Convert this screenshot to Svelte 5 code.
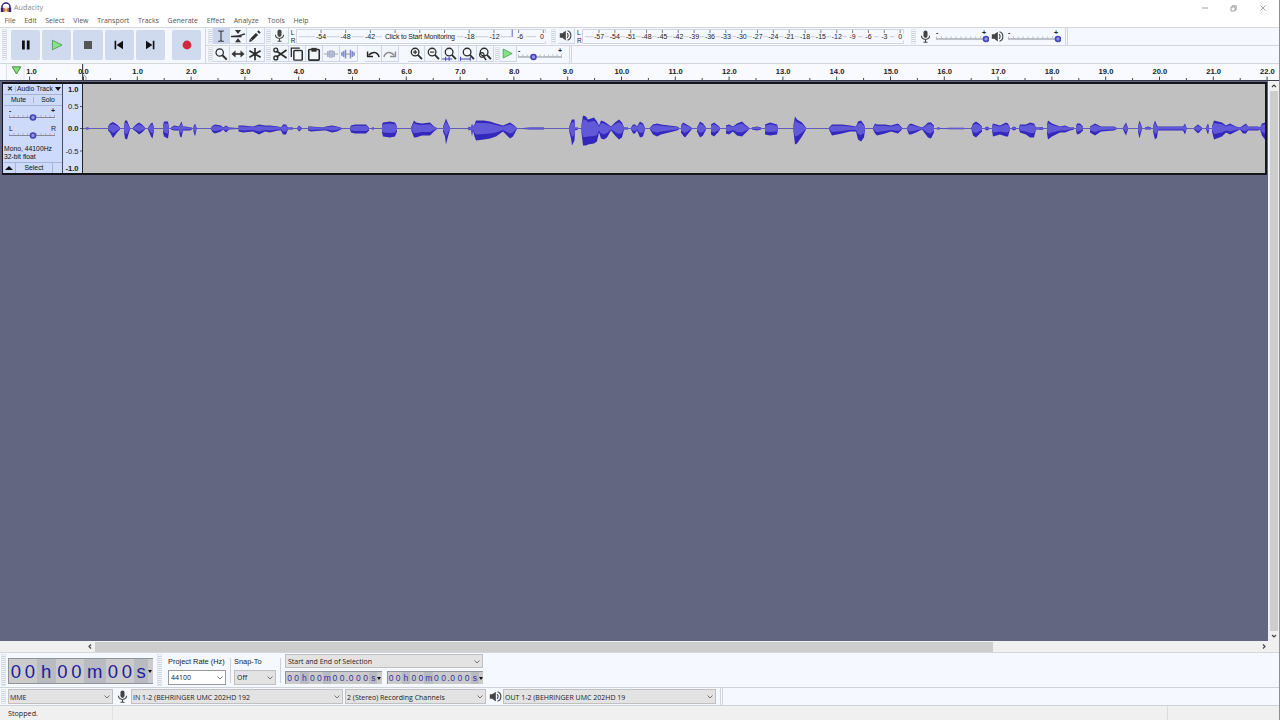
<script lang="ts">
  type Point = [number, number, number];

  const menus = ["File", "Edit", "Select", "View", "Transport", "Tracks", "Generate", "Effect", "Analyze", "Tools", "Help"];

  const ORIGIN = 83.5;
  const SECOND = 53.8;
  const MID = 44.5;

  const seconds = Array.from({ length: 23 }, (_, i) => i);
  const halfTicks = Array.from({ length: 46 }, (_, i) => i - 1);

  const recTicks = Array.from({ length: 10 }, (_, i) => i);
  const recLabels = [
    { x: 25, t: "-54" }, { x: 49.5, t: "-48" }, { x: 74, t: "-42" },
    { x: 173.5, t: "-18" }, { x: 198.5, t: "-12" }, { x: 224, t: "-6" }, { x: 246, t: "0" },
  ];
  const playLabels = Array.from({ length: 20 }, (_, i) => ({ x: 17 + i * 15.85, t: i === 19 ? "0" : String(i * 3 - 57) }));

  // [x, peak above the zero line, peak below it]
  const clips: Point[][] = [
    [[86, 1, 1], [88, 1, 1], [90, 0.3, 0.3]],
    [[108, 2, 2], [110, 5, 4], [113, 6.5, 9.5], [117, 4, 4], [120, 1, 1]],
    [[124, 2, 3], [125, 8, 10], [127, 8, 11], [129, 3, 4], [130, 1, 1]],
    [[133, 1, 1], [136, 4, 3], [139, 6, 6], [142, 4, 4], [145, 1, 1]],
    [[148, 1, 1], [151, 5, 8], [152.5, 6, 10], [154, 1, 2]],
    [[163, 3, 4], [164, 7, 8], [168, 7, 10], [169, 1, 3]],
    [[171, 1, 1], [174, 3, 2], [179, 2, 2], [180, 4, 8], [181.5, 7, 9], [183, 2, 2], [186, 2, 2], [190, 1, 2], [192, 1, 1]],
    [[193.5, 2, 3], [195, 5, 8], [196.5, 1, 1]],
    [[211, 1, 1], [213, 3, 4], [215, 4, 5], [221, 3, 3], [223, 1, 1], [226, 3, 4], [229, 1, 1], [238, 0.5, 0.5]],
    [[238.5, 3, 3], [243, 3, 4], [253, 2, 3], [259, 4, 6], [265, 3, 3], [270, 3, 4], [278, 2, 2], [281, 1, 2], [283, 4, 6], [286, 4, 6], [288, 1, 1], [293, 1, 1]],
    [[297.5, 1, 1], [299, 3, 3], [301.5, 1, 1]],
    [[308, 2, 2], [311, 2, 3], [323, 1, 2], [326, 2, 2], [332, 3, 4], [337, 2, 3], [342, 0.5, 0.5]],
    [[350, 1, 1], [351, 3, 4], [355, 4, 5], [366, 4, 5], [369, 1, 2]],
    [[372, 1, 1], [374, 1, 1]],
    [[382, 4, 4], [383, 6, 8], [390, 7, 9], [395, 6, 8], [397, 2, 3]],
    [[411, 1, 1], [414, 8, 9], [416, 6, 9], [422, 5, 7], [430, 6, 7], [434, 2, 3], [437, 0.5, 0.5]],
    [[443, 2, 3], [445, 7, 8], [446, 10, 16], [448, 5, 8], [450, 1, 1]],
    [[468.5, 2, 2], [471, 1, 1], [472, 5, 8], [473, 2, 2], [474.5, 4, 8], [476, 8, 12], [484, 8, 11], [490, 7, 10], [496, 5, 8], [503, 3, 3], [510, 6, 10], [513, 4, 8], [517, 0.5, 0.5]],
    [[523, 0.5, 0.5], [530, 1, 1], [544, 1, 1]],
    [[569, 1, 2], [571, 7, 10], [572, 9, 17], [574.5, 9, 12], [575, 1, 2], [578, 1, 1]],
    [[581.5, 4, 4], [583, 13, 17], [586, 12, 17], [588, 9, 16], [594, 11, 15], [597, 7, 13], [599, 3, 4], [601, 8, 10], [604, 7, 11], [607, 5, 9], [611, 2, 2], [615, 6, 7], [619, 9, 11], [622, 6, 9], [624, 1, 1], [628, 1, 1]],
    [[631, 1, 1], [633, 4, 5], [635, 4, 5], [637, 2, 2], [640, 7, 9], [643, 5, 8], [645, 1, 1]],
    [[650, 1, 1], [653, 4, 6], [657, 5, 8], [661, 4, 6], [669, 3, 4], [677, 2, 2], [679, 1, 1]],
    [[681, 3, 4], [683, 6, 7], [685, 5, 9], [690, 2, 3], [692, 0.5, 0.5]],
    [[697, 1, 3], [700, 7, 9], [703, 5, 7], [706, 1, 1]],
    [[711, 4, 6], [714, 6, 8], [718, 3, 4], [720, 1, 1]],
    [[726, 3, 5], [729, 4, 6], [733, 2, 3], [737, 5, 7], [742, 7, 8], [745, 4, 5], [749, 1, 1]],
    [[752, 1, 1], [757, 2, 2], [761, 1, 1]],
    [[765, 4, 6], [770, 6, 7], [777, 4, 6], [778, 1, 1]],
    [[793.5, 4, 3], [795, 12, 16], [797, 9, 15], [802, 6, 8], [806, 1, 1]],
    [[829, 1, 1], [832, 4, 7], [842, 4, 5], [850, 3, 3], [856, 2, 3], [858, 7, 11], [861, 8, 13], [864, 4, 9], [865, 1, 1]],
    [[873, 1, 1], [875, 5, 5], [877, 4, 7], [885, 4, 5], [891, 3, 3], [898, 5, 5], [902, 1, 1]],
    [[907, 1, 1], [909, 4, 6], [911, 5, 6], [916, 3, 4], [922, 1, 1], [925, 3, 5], [928, 6, 9], [931, 6, 10], [934, 3, 4]],
    [[937, 1, 1], [939, 1, 1], [941, 0.3, 0.3], [950, 0.8, 0.8], [964, 0.8, 0.8]],
    [[971.5, 1, 1], [973, 5, 7], [976, 7, 9], [979, 5, 6], [982, 2, 3]],
    [[985, 1, 1], [987, 2, 2], [989, 1, 1]],
    [[992, 2, 2], [993, 5, 8], [1000, 3, 6], [1006, 6, 8], [1008, 5, 8], [1010, 1, 1]],
    [[1012, 1, 1], [1014, 2, 2], [1016, 1, 1]],
    [[1019, 1, 1], [1020, 4, 4], [1026, 4, 6], [1030, 6, 9], [1034, 5, 9], [1036, 1, 1], [1043, 1.2, 1.2]],
    [[1047, 4, 5], [1048, 8, 11], [1052, 5, 8], [1060, 2, 4], [1065, 3, 4], [1070, 1, 2], [1074, 1, 1]],
    [[1076, 2, 2], [1077, 5, 6], [1080, 5, 5], [1083, 2, 2]],
    [[1090, 2, 4], [1095, 5, 7], [1101, 2, 3], [1114, 2, 2], [1117, 0.5, 0.5]],
    [[1123, 1, 1], [1126, 6, 7], [1128, 1, 1]],
    [[1138, 2, 3], [1139.5, 8, 10], [1141, 4, 4], [1142, 1, 1]],
    [[1145, 1, 1], [1148, 2, 1], [1151, 1, 1]],
    [[1153, 2, 3], [1155, 8, 11], [1157, 3, 9], [1158, 2, 2], [1183, 2, 2], [1185, 5, 6], [1186.5, 1, 1]],
    [[1194, 1, 1], [1198, 4, 5], [1202, 1, 1]],
    [[1206, 1, 1], [1208, 5, 6], [1209, 2, 2]],
    [[1212, 2, 3], [1214, 8, 11], [1222, 6, 8], [1226, 3, 4], [1230, 5, 6], [1236, 2, 3], [1240, 1, 1], [1243, 3, 5], [1246, 5, 5], [1248, 2, 2], [1258, 2, 2], [1260, 1, 1], [1262, 5, 7], [1265, 6, 11]],
  ];

  function shape(points: Point[], up: number, down: number) {
    const top = points.map(([x, a]) => `${x - 83},${MID - a * up}`);
    const bottom = [...points].reverse().map(([x, , b]) => `${x - 83},${MID + b * down}`);
    return [...top, ...bottom].join(" ");
  }

  const editIcons = ["cut", "copy", "paste", "trim", "silence"];
  const zoomIcons = ["zoomin", "zoomout", "zoomsel", "zoomfit", "zoomtoggle"];
  const smallTime = "00h00m00.000s".split("");
  const bigTime = [
    { t: "00", w: 28 }, { t: "h", w: 18.5 }, { t: "00", w: 28 }, { t: "m", w: 22.5 }, { t: "00", w: 28 }, { t: "s", w: 14 },
  ];
</script>

{#snippet icon(name: string, size = 16)}
  <svg class="icon" width={size} height={size} viewBox="0 0 16 16" fill="none" stroke="#2c2c2c" stroke-width="1.6">
    {#if name === "pause"}
      <path d="M4 3.5h2.8v9H4zM8.8 3.5h2.8v9H8.8z" fill="#111" stroke="none" />
    {:else if name === "play"}
      <path d="M3.4 3.2 13 8l-9.6 4.8z" fill="#84e386" stroke="#4f9d55" stroke-width="0.9" />
    {:else if name === "stop"}
      <path d="M4 4h8v8H4z" fill="#555" stroke="none" />
    {:else if name === "start"}
      <path d="M3.6 3.8h1.6v8.4H3.6zM12 3.8v8.4L5.6 8z" fill="#111" stroke="none" />
    {:else if name === "end"}
      <path d="M10.8 3.8h1.6v8.4h-1.6zM4 3.8v8.4L10.4 8z" fill="#111" stroke="none" />
    {:else if name === "record"}
      <circle cx="8" cy="8" r="4.4" fill="#d2293d" stroke="none" />
    {:else if name === "ibeam"}
      <path d="M4.8 2.2H7l1 .8 1-.8h2.2M8 3v10.4M4.8 14H7l1-.8 1 .8h2.2" stroke-width="1.2" />
    {:else if name === "envelope"}
      <path d="M0 8.6c5 .2 9 0 16-3M0 8.6h12" stroke-width="1.8" />
      <path d="M4.5 1.2h7L8 5.6zM4.5 15h7L8 10.6z" fill="#333" stroke="none" />
    {:else if name === "pencil"}
      <path d="m4 12 6.3-6.3M11.7 4.3l1.6-1.6" stroke-width="3.4" />
      <path d="m1.2 14.9 1.1-4 2.9 2.9z" fill="#333" stroke="none" />
    {:else if name === "magnifier"}
      <circle cx="6.5" cy="6.3" r="4.2" stroke-width="1.4" />
      <path d="m9.6 9.4 5 5" stroke-width="2.2" />
    {:else if name === "shift"}
      <path d="M3 8h10" stroke-width="1.8" />
      <path d="M.5 8l4.7-4v8zM15.5 8l-4.7-4v8z" fill="#333" stroke="none" />
    {:else if name === "star"}
      <path d="M8 1v14M1.6 4.3l12.8 7.4M14.4 4.3 1.6 11.7" stroke-width="1.9" />
    {:else if name === "mic"}
      <rect x="5.5" y=".5" width="5" height="9.2" rx="2.5" fill="#444" stroke="none" />
      <path d="M3 7.2c0 2.6 2 4.4 5 4.4s5-1.8 5-4.4M8 11.4v3.4M5.5 15h5" stroke="#444" stroke-width="1.3" />
    {:else if name === "speaker"}
      <path d="M1 5.3h3L8.4 2v12L4 10.7H1z" fill="#444" stroke="none" />
      <path d="M10 5.2c1.6 1.2 1.6 4.4 0 5.6M10.5 2.2c5.4 1.6 5.4 10 0 11.6" stroke="#444" stroke-width="1.4" />
    {:else if name === "cut"}
      <path d="M4 4.6 15.5 12.5M4 11.4l11.5-8" stroke-width="2" />
      <circle cx="3.2" cy="3.5" r="2.2" />
      <circle cx="3.2" cy="12.5" r="2.2" />
    {:else if name === "copy"}
      <path d="M1.5 11.5V1.2h9.7" stroke-width="1.5" />
      <rect x="4.4" y="4" width="9.6" height="11" rx="1" fill="#f3f7fd" stroke-width="1.7" />
    {:else if name === "paste"}
      <rect x="2" y="2.8" width="12" height="12.2" rx="1" stroke-width="1.8" />
      <path d="M5 1h6v4.4H5z" fill="#333" stroke="none" />
    {:else if name === "trim"}
      <path d="M0 8h3.5M12.5 8H16" stroke="#999" stroke-width="1" />
      <path d="M4.5 4.5v7M6.8 3.8v8.4M9.2 3.8v8.4M11.5 4.5v7" stroke="#969cba" stroke-width="1.6" />
    {:else if name === "silence"}
      <path d="M1 6v4M3 4.5v7M5.2 3v10M10.8 3v10M13 4.5v7M15 6v4" stroke="#858dcc" stroke-width="1.8" />
      <path d="M5 8h6" stroke="#888" stroke-width="1" />
    {:else if name === "undo" || name === "redo"}
      <g transform={name === "redo" ? "matrix(-1 0 0 1 16 0)" : ""} stroke={name === "redo" ? "#8c8c90" : "#222"}>
        <path d="M3 9.5C7 5 13 5 15 11.5" stroke-width="1.7" />
        <path d="M1.8 5v5.9H8" stroke-width="1.6" />
      </g>
    {:else}
      <circle cx="7" cy="5.8" r="4.4" stroke-width="1.5" />
      <path d="m10.2 9 4.6 4.8" stroke-width="2.1" />
      {#if name === "zoomin"}
        <path d="M4.6 5.8h4.8M7 3.4v4.8" stroke-width="1.3" />
      {:else if name === "zoomout"}
        <path d="M4.6 5.8h4.8" stroke-width="1.3" />
      {:else if name === "zoomsel"}
        <path d="M-1 13.6h11.5M3 11.2v4.6M7 11.2v4.6" stroke="#4244b4" stroke-width="1.2" />
      {:else if name === "zoomfit"}
        <path d="M-1 13.6h11.5M-.6 11.2v4.6M10.6 11.2v4.6" stroke="#4244b4" stroke-width="1.2" />
      {:else}
        <circle cx="4.4" cy="9" r="2.6" stroke-width="1.3" />
        <path d="m6.5 11 2.8 4" stroke-width="1.8" />
      {/if}
    {/if}
  </svg>
{/snippet}

{#snippet slider(width: number, pos: number, left = "-", right = "+")}
  <svg class="slider" {width} height="17" viewBox="0 0 {width} 17">
    <text x="1" y="6.5" class:sign={left === "-"}>{left}</text>
    <text x={width - 7} y="6.5" class:sign={left === "-"}>{right}</text>
    <path d="M1 11H{width - 3}" stroke="#858a95" stroke-width="1.2" />
    {#each Array.from({ length: 11 }, (_, i) => i) as i (i)}
      <path d="M{1.5 + (i * (width - 5)) / 10} 8.5v2" stroke="#a0a4ae" stroke-width="0.7" />
    {/each}
    <circle cx={pos} cy="11" r="2.5" fill="#9497e0" stroke="#4443bb" stroke-width="1.6" />
  </svg>
{/snippet}

{#snippet chevron()}
  <svg class="chev" width="6" height="4" viewBox="0 0 6 4" fill="none" stroke="#555" stroke-width="0.8"><path d="m.5.5 2.5 2.5L5.5.5" /></svg>
{/snippet}

{#snippet timeBox()}
  <div class="timebox">
    {#each smallTime as ch, i (i)}
      <span class:unit={/[hms]/.test(ch)} class:dot={ch === "."}>{ch}</span>
    {/each}
    <i class="drop"></i>
  </div>
{/snippet}

<div class="app">
  <header class="title">
    <svg width="12" height="11" viewBox="0 0 12 11">
      <path d="M2 7V5a4 4 0 0 1 8 0v2" fill="none" stroke="#2b2778" stroke-width="1.5" />
      <path d="M3.8 7.5 5 5l1 2.5L7 5l1.2 2.5v2H3.8z" fill="#f2a53a" />
      <path d="M.8 5.8h2.8V10H.8zM8.4 5.8h2.8V10H8.4z" fill="#2b2778" />
      <path d="M3.5 6.5h1V10h-1zM7.5 6.5h1V10h-1z" fill="#d63b35" />
    </svg>
    <span>Audacity</span>
    <svg class="winctl" width="66" height="8" viewBox="0 0 66 8" fill="none" stroke="#8a8a8a" stroke-width="0.8">
      <path d="M1 4h6M30 3h4v4h-4zM31.2 3V1.8h4v4H34M59.5 1.5l5 5M64.5 1.5l-5 5" />
    </svg>
  </header>

  <nav class="menu">
    {#each menus as m (m)}<span>{m}</span>{/each}
  </nav>

  <section class="toolbars">
    <div class="transport">
      <i class="grip"></i>
      {#each ["pause", "play", "stop", "start", "end", "record"] as name (name)}
        <button class="big" class:rec={name === "record"} aria-label={name}>{@render icon(name)}</button>
      {/each}
    </div>
    <div class="rows">
      <div class="row">
        <i class="grip"></i>
        <button class="tool active" aria-label="selection">{@render icon("ibeam", 14)}</button>
        <button class="tool" aria-label="envelope">{@render icon("envelope", 14)}</button>
        <button class="tool" aria-label="draw">{@render icon("pencil", 14)}</button>
        <i class="grip two"></i>
        <button class="tool" aria-label="record meter">{@render icon("mic", 13)}</button>
        <div class="lr"><span>L</span><span>R</span></div>
        <svg class="meter" width="252" height="17" viewBox="0 0 252 17">
          <path class="box" d="M.5 1.5h249v14H.5z" />
          <path d="M3 8.7h243" stroke="#aeb2bd" stroke-width="0.6" />
          {#each recTicks as i (i)}<path d="M{25 + i * 24.7} 2v3" stroke="#666" stroke-width="0.8" />{/each}
          {#each recLabels as l (l.t)}
            <rect x={l.x - 6} y="5" width="12" height="8" fill="#f5f8fe" />
            <text x={l.x} y="11.3">{l.t}</text>
          {/each}
          <rect x="86" y="5" width="75" height="8" fill="#f5f8fe" />
          <text x="124" y="11.4" textLength="70">Click to Start Monitoring</text>
          <path d="M216.2 1.5v7" stroke="#605bc8" />
        </svg>
        <i class="grip three"></i>
        <button class="tool" aria-label="playback meter">{@render icon("speaker", 13)}</button>
        <div class="lr"><span>L</span><span>R</span></div>
        <svg class="meter" width="323" height="17" viewBox="0 0 323 17">
          <path class="box" d="M.5 1.5h321v14H.5z" />
          <path d="M3 8.7h314" stroke="#aeb2bd" stroke-width="0.6" />
          {#each playLabels as l (l.t)}
            <path d="M{l.x} 2v3" stroke="#666" stroke-width="0.8" />
            <rect x={l.x - 5.5} y="5.4" width="11" height="7" fill="#f5f8fe" />
            <text x={l.x} y="11.3">{l.t}</text>
          {/each}
        </svg>
        <i class="grip four"></i>
        <span class="plain">{@render icon("mic", 13)}</span>
        {@render slider(54, 51)}
        <span class="plain spk">{@render icon("speaker", 13)}</span>
        {@render slider(54, 51)}
        <i class="end"></i>
      </div>
      <div class="row second">
        <i class="grip"></i>
        {#each ["magnifier", "shift", "star"] as name (name)}
          <button class="tool" aria-label={name}>{@render icon(name, 14)}</button>
        {/each}
        <i class="grip two"></i>
        {#each editIcons as name (name)}
          <button class="tool" aria-label={name}>{@render icon(name, 14)}</button>
        {/each}
        <i class="gap"></i>
        <button class="tool" aria-label="undo">{@render icon("undo", 14)}</button>
        <button class="tool" aria-label="redo">{@render icon("redo", 14)}</button>
        <i class="gap wide"></i>
        {#each zoomIcons as name (name)}
          <button class="tool" aria-label={name}>{@render icon(name, 14)}</button>
        {/each}
        <i class="grip speed"></i>
        <button class="tool" aria-label="play at speed">{@render icon("play", 15)}</button>
        {@render slider(48, 16.5)}
        <i class="end"></i>
      </div>
    </div>
  </section>

  <svg class="ruler" width="1279" height="17" viewBox="0 0 1279 16">
    <path d="M6.5 0v16M24 0v16" stroke="#dde2ec" />
    <path d="M12.2 2.8h8.6l-4.3 7.2z" fill="#83e37a" stroke="#477a46" stroke-width="0.9" />
    <text x="31.5" y="10.3">1.0</text>
    {#each halfTicks as i (i)}
      <path d="M{ORIGIN + (i * SECOND) / 2} {i % 2 ? 14 : 12.5}V16" stroke="#333" stroke-width="0.9" />
    {/each}
    <path d="M29.6 12.5V16" stroke="#333" stroke-width="0.9" />
    {#each seconds as s (s)}
      <text x={ORIGIN + s * SECOND + (s ? 0.3 : 0)} y="10.3">{s}.0</text>
    {/each}
    <path d="M82.7 0v16" stroke="#222" />
    <path d="M84 10.5l2 3v3" stroke="#999" fill="none" />
  </svg>

  <main class="workspace">
    <div class="tracks">
      <div class="track">
        <div class="panel">
          <div class="head">
            <span class="close">✕</span>
            <span class="name">Audio Track</span>
            <i class="tri"></i>
          </div>
          <div class="pair"><span>Mute</span><span>Solo</span></div>
          {@render slider(50, 25)}
          {@render slider(50, 25, "L", "R")}
          <div class="info">Mono, 44100Hz<br />32-bit float</div>
          <div class="foot"><span class="up"></span><span class="sel">Select</span></div>
        </div>
        <svg class="scale" width="20" height="89" viewBox="0 0 19 89">
          <text x="15.5" y="7.5" class="b">1.0</text>
          <text x="15.5" y="24.8">0.5</text>
          <text x="15.5" y="47.2" class="b">0.0</text>
          <text x="15.5" y="69.6">-0.5</text>
          <text x="15.5" y="87" class="b">-1.0</text>
          <path d="M17 22.5h2M17 44.5h2M17 67h2" stroke="#333" stroke-width="0.8" />
        </svg>
        <svg class="wave" width="1182" height="89" viewBox="0 0 1182 89">
          <path d="M0 {MID}h1182" stroke="#4a43b4" stroke-width="0.8" />
          {#each clips as c, i (i)}
            <polygon points={shape(c, 1, 1)} fill="#3328bb" />
            <polygon points={shape(c, 0.7, 0.5)} fill="#6259d8" />
          {/each}
        </svg>
      </div>
    </div>
    <div class="vscroll">
      <svg width="10" height="10" viewBox="0 0 10 10"><path d="m3 6 2-2 2 2" /></svg>
      <i></i>
      <svg width="10" height="10" viewBox="0 0 10 10"><path d="m3 4 2 2 2-2" /></svg>
    </div>
  </main>

  <div class="hscroll">
    <svg width="10" height="11" viewBox="0 0 10 11"><path d="M6 3.5 4 5.5l2 2" /></svg>
    <div class="rail"><i></i></div>
    <svg width="10" height="11" viewBox="0 0 10 11"><path d="m4 3.5 2 2-2 2" /></svg>
  </div>

  <section class="selection">
    <i class="grip"></i>
    <div class="bigtime">
      {#each bigTime as c, i (i)}
        <span class:unit={c.t.length === 1} style="width: {c.w}px">{#each c.t.split("") as ch, j (j)}<b>{ch}</b>{/each}</span>
      {/each}
      <i class="drop"></i>
    </div>
    <i class="grip mid"></i>
    <div class="field rate"><label for="rate">Project Rate (Hz)</label><div id="rate" class="select white"><span>44100</span>{@render chevron()}</div></div>
    <i class="bar"></i>
    <div class="field snap"><label for="snap">Snap-To</label><div id="snap" class="select"><span>Off</span>{@render chevron()}</div></div>
    <i class="bar"></i>
    <div class="range">
      <div class="select"><span>Start and End of Selection</span>{@render chevron()}</div>
      <div class="boxes">{@render timeBox()}{@render timeBox()}</div>
    </div>
  </section>

  <section class="device">
    <i class="grip"></i>
    <div class="select host"><span>MME</span>{@render chevron()}</div>
    <span class="dev">{@render icon("mic", 13)}</span>
    <div class="select input"><span>IN 1-2 (BEHRINGER UMC 202HD 192</span>{@render chevron()}</div>
    <div class="select chans"><span>2 (Stereo) Recording Channels</span>{@render chevron()}</div>
    <span class="dev">{@render icon("speaker", 13)}</span>
    <div class="select output"><span>OUT 1-2 (BEHRINGER UMC 202HD 19</span>{@render chevron()}</div>
    <i class="end"></i>
  </section>

  <footer class="status"><span class="msg">Stopped.</span><span class="mid"></span><span></span></footer>
</div>

<style>
  :global(body) { overflow: hidden; }
  .app, .app :global(*) { box-sizing: border-box; }
  .app {
    width: 1280px;
    height: 720px;
    display: flex;
    flex-direction: column;
    border-right: 1px solid #8d8d94;
    background: #f5f8fe;
    color: #222;
    font: 7px/1 "Open Sans", "Noto Sans", sans-serif;
  }
  .icon, .slider, .meter, .chev { display: block; flex: none; }
  .icon { overflow: visible; }
  button { border: 0; padding: 0; display: grid; place-items: center; flex: none; }

  .title {
    height: 14px;
    flex: none;
    display: flex;
    align-items: center;
    padding-top: 1px;
    background: #fff;
    color: #8b8b8b;
    font-size: 7.3px;
  }
  .title span { margin-left: 2px; }
  .winctl { margin-left: auto; margin-right: 12px; }
  .menu {
    height: 13px;
    flex: none;
    display: flex;
    align-items: center;
    gap: 8.6px;
    padding: 1px 0 0 4.5px;
    background: #fff;
    color: #555;
    font-size: 7.02px;
  }

  .toolbars {
    height: 36px;
    flex: none;
    display: flex;
    border-top: 1px solid #d3d6dc;
  }
  .transport {
    width: 206px;
    display: flex;
    align-items: center;
    gap: 2px;
    padding: 0 0 2px 2px;
    border-right: 1px solid #d3d6dc;
  }
  .grip {
    flex: none;
    width: 5px;
    align-self: stretch;
    margin: 1px 0;
    border: 1px solid #e0e4ec;
    background: repeating-linear-gradient(#f5f8fe 0 1px, #ccd0d9 1px 2px);
  }
  .transport .grip { margin-right: 2px; }
  .big {
    width: 29.2px;
    height: 30px;
    border-radius: 2px;
    background: #cfdaef;
  }
  .big.rec { margin-left: 5px; }
  .rows { flex: 1; }
  .row {
    height: 17.5px;
    display: flex;
    align-items: center;
    padding-left: 2px;
    border-bottom: 1px solid #d3d6dc;
  }
  .row.second { border-bottom: 0; height: 17px; }
  .tool {
    width: 17.2px;
    height: 16px;
    background: #f1f5fc;
    border-right: 1px solid #cdd6e6;
    border-bottom: 1px solid #cdd6e6;
  }
  .tool.active { background: #cbd6ec; }
  .grip.two { margin-left: 1px; margin-right: 1px; }
  .grip.three { margin-left: 3px; margin-right: 2px; }
  .grip.four { margin-left: 6px; margin-right: 0; }
  .grip.speed { margin-left: 1px; margin-right: 0; }
  .gap { flex: none; width: 7px; }
  .gap.wide { width: 9px; }
  .end { flex: none; width: 3px; align-self: stretch; border: solid #d3d6dc; border-width: 0 1px; margin-left: 4px; }
  .lr {
    width: 7px;
    padding-left: 2px;
    display: flex;
    flex-direction: column;
    gap: 1px;
    font: 6.5px/7px "Liberation Sans", Arial, sans-serif;
  }
  .meter text, .slider text { font: 7px "Liberation Sans", Arial, sans-serif; fill: #222; }
  .slider .sign { font-weight: bold; }
  .meter text { text-anchor: middle; }
  .box { fill: #f5f8fe; stroke: #c9cdd6; stroke-width: 0.8; }
  .plain { width: 19px; display: grid; place-items: center; }
  .plain.spk { width: 18px; }

  .ruler { display: block; flex: none; background: #f8faff; border-top: 1px solid #d3d6dc; }
  .ruler text {
    font: bold 7.6px "Liberation Sans", Arial, sans-serif;
    text-anchor: middle;
    fill: #222;
  }

  .workspace { flex: 1; min-height: 0; display: flex; background: #636680; border-top: 1px solid #3c3d50; }
  .tracks { flex: 1; padding: 1px 0 0 2px; }
  .track {
    width: 1265px;
    height: 93px;
    display: flex;
    border: 1px solid #15151c;
    border-width: 2px 2px 2px 1px;
    background: #cddafa;
  }
  .panel {
    width: 60px;
    padding-left: 1px;
    border-right: 1px solid #444a63;
    display: flex;
    flex-direction: column;
    font: 6.8px/1 "Liberation Sans", Arial, sans-serif;
    color: #111;
  }
  .head { height: 11px; display: flex; align-items: center; border-bottom: 1px solid #a9b4d2; }
  .close { width: 11px; text-align: center; font-weight: bold; }
  .name { flex: 1; border-left: 1px solid #a9b4d2; padding-left: 1px; white-space: nowrap; }
  .tri { border: solid transparent; border-width: 4px 3.5px 0; border-top-color: #111; margin-right: 1px; }
  .pair { height: 11px; display: grid; grid-template-columns: 1fr 1fr; border-bottom: 1px solid #a9b4d2; align-items: center; text-align: center; }
  .pair span + span { border-left: 1px solid #a9b4d2; }
  .panel .slider { margin-left: 4px; height: 18px; }
  .info { padding-top: 3px; line-height: 7.5px; flex: 1; white-space: nowrap; }
  .foot { height: 11px; display: flex; align-items: center; border-top: 1px solid #a9b4d2; }
  .up { width: 8px; border: solid transparent; border-width: 0 4px 4px; border-bottom-color: #111; margin: 0 2px 0 1px; }
  .sel { width: 38px; height: 10px; line-height: 10px; text-align: center; border: solid #a9b4d2; border-width: 0 1px; }
  .scale { display: block; background: #d3dffc; border-right: 1px solid #222; }
  .scale text { font: 7.6px "Liberation Sans", Arial, sans-serif; text-anchor: end; fill: #222; }
  .scale .b { font-weight: bold; }
  .wave { display: block; background: #c0c0c0; }

  .vscroll { width: 11px; background: #f0f0f0; display: flex; flex-direction: column; align-items: center; }
  .vscroll i { flex: 1; width: 8px; background: #cdcdcd; }
  .vscroll path, .hscroll path { fill: none; stroke: #444; stroke-width: 1.2; }
  .hscroll { height: 12px; flex: none; display: flex; align-items: center; padding: 0 10px 0 85px; background: #f0f0f0; border-bottom: 1px solid #d3d6dc; }
  .rail { flex: 1; align-self: stretch; padding-top: 1px; }
  .rail i { display: block; width: 898px; height: 10px; background: #cdcdcd; }

  .selection { height: 35px; flex: none; display: flex; padding-left: 1px; border-bottom: 1px solid #cfd2d9; }
  .bigtime {
    width: 145px;
    height: 26px;
    margin: 5px 4px 0 2px;
    display: flex;
    border: 1px solid #8f939d;
    border-right: 0;
    background: #cbcbcb;
    color: #1d1d9c;
    font: 18.5px/25px "Liberation Sans", Arial, sans-serif;
  }
  .bigtime span { display: flex; justify-content: space-around; flex: none; }
  .bigtime b { font-weight: normal; }
  .unit { background: #b9bbc2; }
  .drop { align-self: center; border: solid transparent; border-width: 3px 2.5px 0; border-top-color: #111; }
  .grip.mid { margin-right: 6px; }
  .field { display: flex; flex-direction: column; gap: 4px; padding-top: 4.5px; font-size: 7.4px; }
  .field label { height: 8px; line-height: 8px; white-space: nowrap; font-family: "Liberation Sans", Arial, sans-serif; }
  .field .select { height: 15px; }
  .rate { width: 58px; }
  .snap { width: 42px; }
  .bar { flex: none; width: 1px; height: 25px; margin: 5px 3.5px 0; background: #cdd0d8; }
  .select {
    height: 14px;
    display: flex;
    align-items: center;
    justify-content: space-between;
    padding: 1px 2px 0;
    border: 1px solid #c0c0c0;
    background: #e3e3e3;
    color: #222;
    font-size: 7px;
    white-space: nowrap;
  }
  .select.white { background: #fff; border-color: #999; }
  .range { width: 198px; margin-left: 1px; padding-top: 1px; display: flex; flex-direction: column; gap: 3px; }
  .boxes { display: flex; justify-content: space-between; }
  .timebox {
    width: 96.5px;
    height: 13px;
    display: flex;
    border: 1px solid #8f939d;
    border-right: 0;
    border-bottom: 0;
    background: #cbcbcb;
    color: #3333a4;
    font: 8.5px/13px "Liberation Sans", Arial, sans-serif;
  }
  .timebox span { width: 7.3px; text-align: center; }
  .timebox .unit { width: 8.6px; }
  .timebox .dot { width: 2px; }

  .device { height: 18px; flex: none; display: flex; align-items: center; padding-left: 1px; border-bottom: 1px solid #cfd2d9; }
  .device .grip { margin-right: 2px; }
  .device .select { height: 15px; padding-left: 1px; }
  .host { width: 105px; }
  .dev { width: 18px; display: grid; place-items: center; }
  .input { width: 212px; }
  .chans { width: 141px; margin-left: 2px; }
  .dev + .output { width: 213px; margin-left: -1px; }

  .status { height: 14px; flex: none; display: flex; background: #f0f0f0; font-size: 7.2px; line-height: 15px; }
  .msg { width: 113px; padding-left: 8px; border-right: 1px solid #e0e0e0; }
  .status .mid { width: 1055px; border-right: 1px solid #dcdcdc; }
</style>
